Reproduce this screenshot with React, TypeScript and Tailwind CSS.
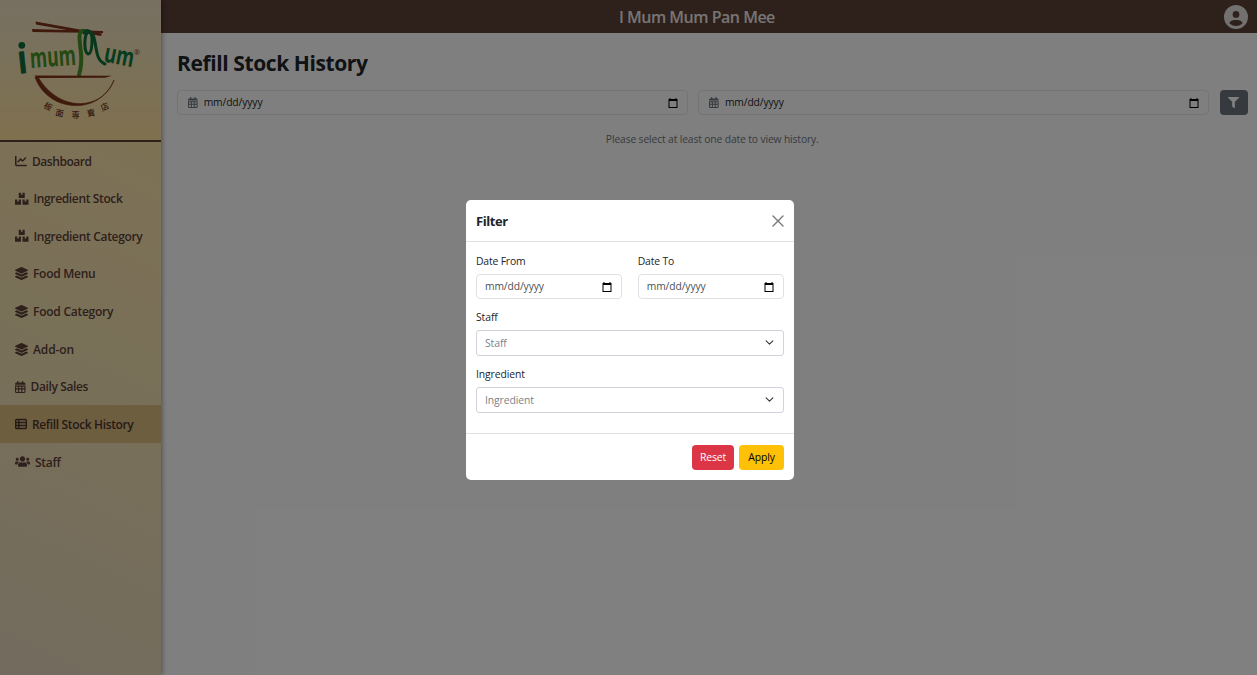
import type { ReactNode } from "react";
import { FaChartLine, FaCircleUser } from "react-icons/fa6";
import { FaBoxes, FaFilter, FaLayerGroup, FaUsers } from "react-icons/fa";

function CalendarIcon({ size, className = "" }: { size: number; className?: string }) {
  return (
    <svg width={(size * 7) / 8} height={size} viewBox="0 0 448 512" fill="currentColor" className={`shrink-0 ${className}`}>
      <path
        fillRule="evenodd"
        d="M96 24a24 24 0 0 1 56 0v40h144V24a24 24 0 0 1 56 0v40h32a64 64 0 0 1 64 64v32H0v-32a64 64 0 0 1 64-64h32zM0 192h448v256a64 64 0 0 1-64 64H64a64 64 0 0 1-64-64zm48 48v72h84v-72zm132 0v72h88v-72zm136 0v72h84v-72zM48 360v88q0 16 16 16h68V360zm132 0v104h88V360zm136 0v104h68q16 0 16-16v-88z"
      />
    </svg>
  );
}

function TableIcon() {
  return (
    <svg width="12" height="12" viewBox="0 0 512 512" fill="currentColor" className="shrink-0">
      <path
        fillRule="evenodd"
        d="M64 32h384a64 64 0 0 1 64 64v320a64 64 0 0 1-64 64H64a64 64 0 0 1-64-64V96a64 64 0 0 1 64-64zM60 96v64h68V96zm132 0v64h260V96zM60 224v64h68v-64zm132 0v64h260v-64zM60 352v64h68v-64zm132 0v64h260v-64z"
      />
    </svg>
  );
}

type NavItem = { label: string; icon: ReactNode; className: string; active?: boolean };

const navItems: NavItem[] = [
  { label: "Dashboard", icon: <FaChartLine size={12} />, className: "gap-[5px] tracking-[-0.45px]" },
  { label: "Ingredient Stock", icon: <FaBoxes size={13.5} />, className: "gap-[5px] tracking-[-0.36px]" },
  { label: "Ingredient Category", icon: <FaBoxes size={13.5} />, className: "gap-[5px] tracking-[-0.32px]" },
  { label: "Food Menu", icon: <FaLayerGroup size={13} />, className: "gap-[5px] tracking-[-0.28px]" },
  { label: "Food Category", icon: <FaLayerGroup size={13} />, className: "gap-[5px] tracking-[-0.25px]" },
  { label: "Add-on", icon: <FaLayerGroup size={13} />, className: "gap-[5px] tracking-[-0.1px]" },
  { label: "Daily Sales", icon: <CalendarIcon size={12} />, className: "gap-[5px] tracking-[-0.37px]" },
  { label: "Refill Stock History", icon: <TableIcon />, className: "gap-[5px] tracking-[-0.36px]", active: true },
  { label: "Staff", icon: <FaUsers size={15} />, className: "gap-[5px] tracking-[-0.3px]" },
];

function Logo() {
  return (
    <svg width="130" height="110" viewBox="15 15 130 110" fill="none">
      <g fill="#7f3216">
        <path d="M35.5 21.5 L36 24.5 L101 36 L102 33.5 Z" />
        <path d="M32 29 L32.5 32 L103 33 L103 31 Z" />
      </g>
      <g fontFamily="'Open Sans', sans-serif" fontWeight="700">
        <text fontSize="30" fill="#0e6b3c" stroke="#0e6b3c" strokeWidth=".6" transform="translate(19 73.5) rotate(-6) scale(1 1.3)">ı</text>
        <circle cx="21.8" cy="45.3" r="3.4" fill="#0e6b3c" />
        <text fontSize="21" fill="#489326" textLength="46" lengthAdjust="spacingAndGlyphs" transform="translate(30.5 68) rotate(-4) scale(1 1.32)">mum</text>
        <text fontSize="21" fill="#0e7a3d" textLength="30" lengthAdjust="spacingAndGlyphs" transform="translate(103 61.5) rotate(11) scale(1 1.25)">um</text>
      </g>
      <path d="M84 31 C77 29 80 43 81 53 C82 62 81 68 79 75" stroke="#489326" strokeWidth="4" strokeLinecap="round" />
      <path d="M84 33 C86 28 92 31 92 39 C92 49 91 54 88 54 C84 52 84 38 87 33 C90 28 94 35 95 42 C97 55 98 61 105 64" stroke="#0e713b" strokeWidth="3" strokeLinecap="round" />
      <path d="M34.5 75.5 L112 75.8 L105 77.8 L37 78 Z" fill="#7f3216" />
      <path d="M35 77 C47 112 99 117 114 80 C103 110 60 114 38 77 Z" fill="#7f3216" stroke="#7f3216" strokeWidth=".7" />
      <text x="133.5" y="55" fontSize="8" fill="#7f4930" fontFamily="'Open Sans', sans-serif">®</text>
      <g fontFamily="'Noto Sans CJK TC', sans-serif" fontWeight="500" fontSize="8.2" fill="#70361f" textAnchor="middle">
        <text transform="translate(46.5 109) rotate(30)">板</text>
        <text transform="translate(59 116) rotate(12)">面</text>
        <text transform="translate(75.5 118)">専</text>
        <text transform="translate(91.5 116) rotate(-10)">賣</text>
        <text transform="translate(106 109.5) rotate(-25)">店</text>
      </g>
    </svg>
  );
}

function PickerIcon() {
  return (
    <svg width="10" height="10" viewBox="0 0 10 10" className="shrink-0">
      <path d="M1.5 0v1h-1v9h9V1h-1V0h-1v1h-5V0z M1.5 3h7v6h-7z" fill="#000" fillRule="evenodd" />
    </svg>
  );
}

function DateField({ calendar = false }: { calendar?: boolean }) {
  return (
    <div
      className={
        calendar
          ? "flex h-[25px] flex-1 items-center rounded-[4px] border border-[#e6e8ea] pr-[9px] pl-[10px]"
          : "flex h-[25px] flex-1 items-center rounded-[4px] border border-[#dee2e6] pr-[9px] pl-2"
      }
    >
      {calendar && <CalendarIcon size={11} className="mr-[6px] text-[#6c757d]" />}
      <span className={calendar ? "pt-px text-[10.3px] tracking-[-0.1px] text-[#212529]" : "text-[10.3px] tracking-[-0.1px] text-[#4b5055]"}>mm/dd/yyyy</span>
      <span className="ml-auto"><PickerIcon /></span>
    </div>
  );
}

function SelectField({ label }: { label: string }) {
  return (
    <div>
      <div className="flex h-4 items-center pt-[2px] text-[10.4px] tracking-[-0.1px]">{label}</div>
      <div className="mt-[5px] flex h-[26px] items-center justify-between rounded-[3px] border border-[#ced4da] pr-[9px] pl-2 text-[10.4px] tracking-[-0.1px] text-[#7b838a]">
        <span className="pt-px">{label}</span>
        <svg width="9" height="9" viewBox="0 0 16 16" fill="none" stroke="#343a40" strokeWidth="2" strokeLinecap="round" strokeLinejoin="round" className="mb-[2px]">
          <path d="m2 5 6 6 6-6" />
        </svg>
      </div>
    </div>
  );
}

export default function App() {
  return (
    <div className="relative flex h-[675px] w-full overflow-hidden bg-white font-['Open_Sans',sans-serif] text-[#212529]">
      <aside className="z-10 flex w-[161px] shrink-0 flex-col bg-[linear-gradient(205deg,#ffe19b_0%,#fae3ac_25%,#f0dfb3_60%,#e6d6bc_100%)] shadow-[1px_0_5px_rgba(0,0,0,0.4)]">
        <div className="flex h-[142px] items-start border-b-2 border-[#5d4037] bg-[linear-gradient(180deg,#efe1c4_0%,#f4e2b6_40%,#ffe19c_100%)] pt-[15px] pl-[15px]">
          <Logo />
        </div>
        <nav className="text-[12px] font-semibold text-[#5d4037]">
          {navItems.map((item) => (
            <div key={item.label} className={item.active ? "bg-[#dcbc80] text-[#4e342e]" : ""}>
              <div className={`flex h-[37.65px] items-center pl-[15px] whitespace-nowrap ${item.className}`}>
                {item.icon}
                <span className="pt-[1.5px]">{item.label}</span>
              </div>
            </div>
          ))}
        </nav>
      </aside>

      <div className="flex min-w-0 flex-1 flex-col">
        <header className="flex h-[33px] items-center justify-between bg-[#5d4037] pr-[9px]">
          <h1 className="pl-[458px] text-[16px] leading-none font-semibold tracking-[-0.5px] whitespace-nowrap text-[#efebe9]">I Mum Mum Pan Mee</h1>
          <FaCircleUser size={24} className="text-[#e5e2e1]" />
        </header>
        <main className="flex flex-col pt-[16px] pr-[9.5px] pl-[16px]">
          <h2 className="flex h-[28px] items-center pt-px text-[21px] font-bold tracking-[-0.4px]">Refill Stock History</h2>
          <div className="mt-[13px] flex gap-[10.5px]">
            <DateField calendar />
            <DateField calendar />
            <button className="flex h-[25px] w-[28px] items-center justify-center rounded-[4px] bg-[#6c757d] text-white">
              <FaFilter size={11} />
            </button>
          </div>
          <p className="mt-[16px] text-center text-[10.3px] leading-4 tracking-[-0.13px] text-[#6c757d]">Please select at least one date to view history.</p>
        </main>
      </div>

      <div className="absolute inset-0 z-20 bg-black/50">
        <section className="mt-[200px] ml-[465.5px] flex h-[280px] w-[328.5px] flex-col rounded-[5px] bg-white">
          <div className="flex h-[42px] items-center justify-between border-b border-[#dee2e6] pr-[10px] pl-[10.5px]">
            <h3 className="pt-[2px] text-[13px] font-bold tracking-[-0.45px]">Filter</h3>
            <svg width="12" height="12" viewBox="0 0 12 12" stroke="#777" strokeWidth="1.4" strokeLinecap="round">
              <path d="m1 1 10 10M11 1 1 11" />
            </svg>
          </div>
          <div className="flex flex-1 flex-col px-[10.5px] pt-[11px] text-[10.4px]">
            <div className="flex gap-4">
              {["Date From", "Date To"].map((label) => (
                <div key={label} className="flex flex-1 flex-col">
                  <div className="flex h-4 items-center pt-[2px] tracking-[-0.18px]">{label}</div>
                  <div className="mt-[5px] flex"><DateField /></div>
                </div>
              ))}
            </div>
            <div className="mt-[10px]"><SelectField label="Staff" /></div>
            <div className="mt-[10px]"><SelectField label="Ingredient" /></div>
          </div>
          <div className="flex h-[47px] items-center justify-end gap-[5px] border-t border-[#dee2e6] pr-[10px] text-[10.4px] tracking-[-0.1px]">
            <button className="h-[25px] w-[42px] rounded-[4px] bg-[#dc3545] pt-px text-white">Reset</button>
            <button className="h-[25px] w-[45px] rounded-[4px] bg-[#ffc107] pt-px text-black">Apply</button>
          </div>
        </section>
      </div>
    </div>
  );
}
